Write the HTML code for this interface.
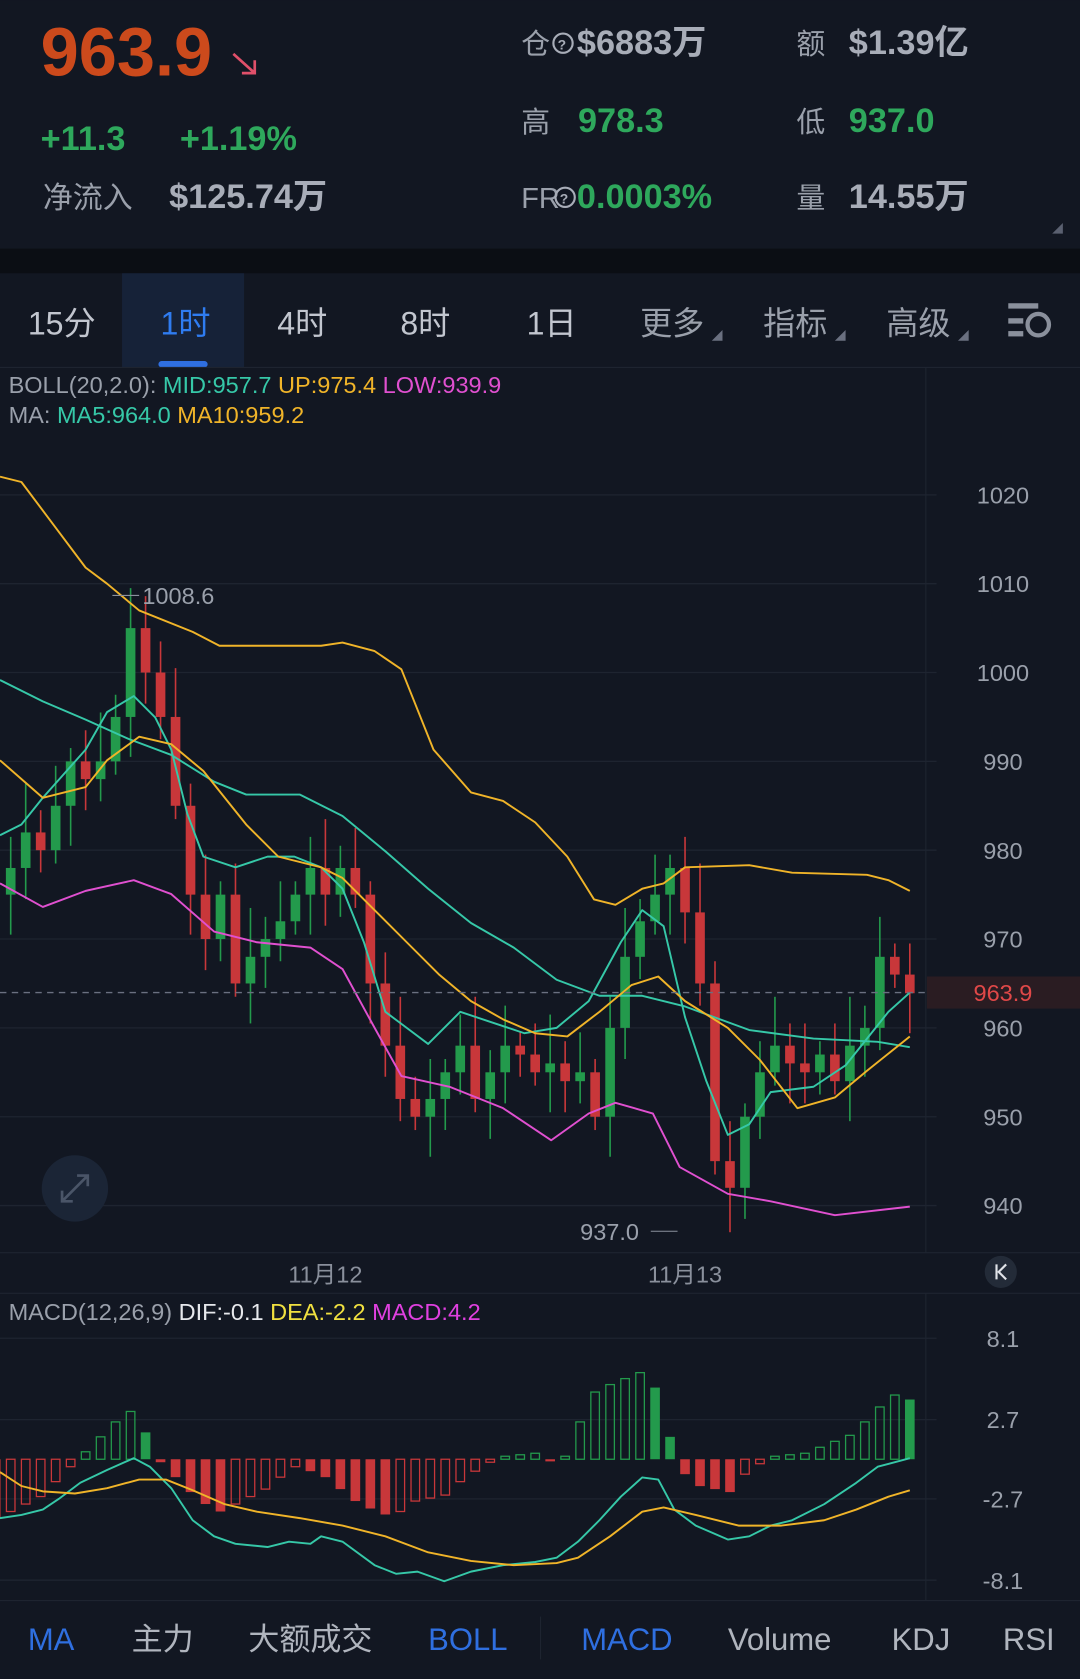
<!DOCTYPE html>
<html><head><meta charset="utf-8">
<style>
html,body{margin:0;padding:0;background:#121722;}
svg{display:block;}
text{font-family:"Liberation Sans Narrow","Liberation Sans","Noto Sans CJK SC",sans-serif;}
.cjk{font-family:"Liberation Sans","Noto Sans CJK SC",sans-serif;}
</style></head>
<body>
<svg id="s" width="1080" height="1679" viewBox="0 0 1009 1568" xmlns="http://www.w3.org/2000/svg">
<rect x="0" y="0" width="1009" height="1568" fill="#121722"/>
<rect x="0" y="232" width="1009" height="23" fill="#0b0e14"/>
<!-- header -->
<text x="38" y="70" font-size="64" font-weight="bold" fill="#cc4a1c">963.9</text>
<path d="M218 50 L238 68 M238 56 L238 68 L226 68" stroke="#e0506a" stroke-width="2.5" fill="none"/>
<text x="38" y="140" font-size="32" font-weight="bold" fill="#2ea85c">+11.3</text>
<text x="168" y="140" font-size="32" font-weight="bold" fill="#2ea85c">+1.19%</text>
<text x="40" y="194" font-size="28" fill="#9aa0ab" class="cjk">净流入</text>
<text x="158" y="194" font-size="32" font-weight="bold" fill="#a8adb8">$125.74万</text>
<text x="487" y="50" font-size="27" fill="#9aa0ab" class="cjk">仓</text>
<circle cx="526" cy="40" r="9" fill="none" stroke="#a8adb8" stroke-width="2"/><text x="521" y="46" font-size="13" font-weight="bold" fill="#a8adb8">?</text>
<text x="539" y="50" font-size="32" font-weight="bold" fill="#a8adb8">$6883万</text>
<text x="744" y="50" font-size="27" fill="#9aa0ab" class="cjk">额</text>
<text x="793" y="50" font-size="32" font-weight="bold" fill="#a8adb8">$1.39亿</text>
<text x="487" y="123" font-size="27" fill="#9aa0ab" class="cjk">高</text>
<text x="540" y="123" font-size="32" font-weight="bold" fill="#2ea85c">978.3</text>
<text x="744" y="123" font-size="27" fill="#9aa0ab" class="cjk">低</text>
<text x="793" y="123" font-size="32" font-weight="bold" fill="#2ea85c">937.0</text>
<text x="487" y="194" font-size="27" fill="#9aa0ab">FR</text>
<circle cx="528" cy="184" r="9" fill="none" stroke="#a8adb8" stroke-width="2"/><text x="523" y="190" font-size="13" font-weight="bold" fill="#a8adb8">?</text>
<text x="539" y="194" font-size="32" font-weight="bold" fill="#2ea85c">0.0003%</text>
<text x="744" y="194" font-size="27" fill="#9aa0ab" class="cjk">量</text>
<text x="793" y="194" font-size="32" font-weight="bold" fill="#a8adb8">14.55万</text>
<path d="M993 208 L993 218 L983 218 Z" fill="#5a6070"/>
<!-- tabs -->
<rect x="114" y="255" width="114" height="88" fill="#162238"/>
<rect x="148" y="337" width="46" height="6" rx="3" fill="#2f6fe0"/>
<g font-size="30" fill="#c2c6cf" class="cjk">
<text x="26" y="312">15分</text>
<text x="150" y="312" fill="#2f7cf0">1时</text>
<text x="259" y="312">4时</text>
<text x="374" y="312">8时</text>
<text x="492" y="312">1日</text>
<text x="598" y="312" fill="#9aa0ab">更多</text>
<text x="713" y="312" fill="#9aa0ab">指标</text>
<text x="828" y="312" fill="#9aa0ab">高级</text>
</g>
<path d="M675 318 L675 308 L665 318Z M790 318 L790 308 L780 318Z M905 318 L905 308 L895 318Z" fill="#6a7080"/>
<g fill="#8a909c"><rect x="942" y="283" width="28" height="5"/><rect x="942" y="297" width="14" height="5"/><rect x="942" y="309" width="14" height="5"/></g>
<circle cx="970" cy="303" r="10" fill="none" stroke="#8a909c" stroke-width="4"/>
<line x1="0" y1="343" x2="1009" y2="343" stroke="#1e2430"/>
<!-- legend -->
<text x="8" y="367" font-size="22"><tspan fill="#9aa0ab">BOLL(20,2.0): </tspan><tspan fill="#36c8a8">MID:957.7 </tspan><tspan fill="#f0b429">UP:975.4 </tspan><tspan fill="#e050d0">LOW:939.9</tspan></text>
<text x="8" y="395" font-size="22"><tspan fill="#9aa0ab">MA: </tspan><tspan fill="#36c8a8">MA5:964.0 </tspan><tspan fill="#f0b429">MA10:959.2</tspan></text>
<line x1="865" y1="343" x2="865" y2="1170" stroke="#1e2430"/>
<g id="grid" stroke="#1e2430" stroke-width="1.2"></g>
<g font-size="22" fill="#9aa0ab" text-anchor="middle">
<text x="937" y="470">1020</text><text x="937" y="553">1010</text><text x="937" y="636">1000</text>
<text x="937" y="719">990</text><text x="937" y="802">980</text><text x="937" y="885">970</text>
<text x="937" y="968">960</text><text x="937" y="1051">950</text><text x="937" y="1134">940</text>
</g>
<g id="candles"></g>
<g fill="none" stroke-width="1.8" stroke-linejoin="round">
<polyline stroke="#f0b429" points="0,445 20,450 50,490 80,530 100,545 130,570 180,590 205,603 300,603 320,600 350,608 375,625 405,700 440,740 470,748 500,768 530,800 555,840 575,845 600,830 620,825 640,810 700,808 740,815 810,817 830,822 850,832"/>
<polyline stroke="#e050d0" points="0,825 40,847 80,832 125,822 160,835 200,870 240,880 290,885 320,905 350,960 375,1005 420,1015 470,1035 515,1065 550,1040 575,1030 610,1040 635,1090 680,1115 720,1122 780,1135 850,1127"/>
<polyline stroke="#36c8a8" points="0,635 40,655 80,672 120,690 160,705 200,730 230,742 280,742 320,762 360,795 400,830 440,862 480,885 520,915 560,930 600,930 640,940 700,962 760,970 820,973 850,978"/>
<polyline stroke="#36c8a8" points="0,780 20,770 40,745 80,700 100,665 125,650 145,670 160,700 175,760 190,800 220,810 250,800 275,800 300,810 320,830 340,880 360,945 380,960 400,975 430,945 460,955 490,965 520,960 550,935 580,880 600,850 620,865 640,950 660,1010 680,1060 700,1050 720,1020 760,1015 790,995 810,970 830,945 850,927"/>
<polyline stroke="#f0b429" points="0,710 40,745 80,735 100,710 130,688 160,695 190,720 230,770 260,800 300,810 320,820 350,850 380,880 410,910 440,935 470,952 500,965 530,968 560,945 590,920 615,912 640,935 680,960 710,990 745,1035 780,1025 810,1000 850,968"/>
</g>
<line x1="0" y1="927" x2="866" y2="927" stroke="#6a7080" stroke-dasharray="6,5" stroke-width="1.2"/>
<rect x="866" y="912" width="143" height="30" fill="#2a1c22"/>
<text x="937" y="935" font-size="22" fill="#e04848" text-anchor="middle">963.9</text>
<line x1="105" y1="556" x2="130" y2="556" stroke="#8a909c"/>
<text x="133" y="564" font-size="22" fill="#9aa0ab">1008.6</text>
<line x1="608" y1="1150" x2="633" y2="1150" stroke="#8a909c"/>
<text x="542" y="1158" font-size="22" fill="#9aa0ab">937.0</text>
<circle cx="70" cy="1110" r="31" fill="#1b2536"/>
<path d="M58 1122 L82 1098 M72 1098 L82 1098 L82 1108 M58 1112 L58 1122 L68 1122" stroke="#4a5568" stroke-width="2.5" fill="none"/>
<!-- date axis -->
<line x1="0" y1="1170" x2="1009" y2="1170" stroke="#1e2430"/>
<line x1="0" y1="1208" x2="1009" y2="1208" stroke="#1e2430"/>
<text x="304" y="1198" font-size="22" fill="#8a909c" text-anchor="middle" class="cjk">11月12</text>
<text x="640" y="1198" font-size="22" fill="#8a909c" text-anchor="middle" class="cjk">11月13</text>
<circle cx="935" cy="1188" r="15" fill="#232b38"/>
<path d="M931 1181 L931 1195 M940 1181 L933 1188 L940 1195" stroke="#e0e3e8" stroke-width="2" fill="none"/>
<!-- macd -->
<text x="8" y="1233" font-size="22"><tspan fill="#9aa0ab">MACD(12,26,9) </tspan><tspan fill="#e6e8ec">DIF:-0.1 </tspan><tspan fill="#f0e040">DEA:-2.2 </tspan><tspan fill="#e040e0">MACD:4.2</tspan></text>
<line x1="865" y1="1208" x2="865" y2="1495" stroke="#1e2430"/>
<g stroke="#1e2430" stroke-width="1.2"><line x1="0" y1="1250" x2="875" y2="1250"/><line x1="0" y1="1326" x2="875" y2="1326"/><line x1="0" y1="1400" x2="875" y2="1400"/><line x1="0" y1="1476" x2="875" y2="1476"/></g>
<g font-size="22" fill="#9aa0ab" text-anchor="middle">
<text x="937" y="1258">8.1</text><text x="937" y="1334">2.7</text><text x="937" y="1408">-2.7</text><text x="937" y="1484">-8.1</text></g>
<g id="hist"></g>
<g fill="none" stroke-width="1.8" stroke-linejoin="round">
<polyline stroke="#36c8a8" points="0,1418 20,1415 40,1410 55,1400 75,1385 100,1373 125,1362 140,1370 160,1390 180,1420 200,1435 220,1442 250,1445 270,1440 290,1442 300,1435 320,1440 350,1462 370,1470 390,1468 415,1477 440,1468 470,1462 500,1459 520,1455 540,1440 560,1420 580,1398 600,1380 615,1382 630,1410 650,1425 680,1438 700,1435 720,1425 740,1420 770,1405 800,1385 820,1370 850,1362"/>
<polyline stroke="#f0b429" points="0,1375 20,1388 40,1393 70,1395 100,1390 130,1382 155,1382 180,1392 210,1405 240,1412 280,1418 320,1425 360,1435 400,1450 440,1458 480,1462 520,1460 540,1455 570,1435 600,1412 620,1408 650,1415 690,1425 730,1425 770,1420 800,1410 830,1398 850,1392"/>
</g>
<!-- bottom tabs -->
<line x1="0" y1="1495" x2="1009" y2="1495" stroke="#1e2430"/>
<line x1="505" y1="1510" x2="505" y2="1550" stroke="#1e2430"/>
<g font-size="29" fill="#b0b5be" class="cjk">
<text x="26" y="1541" fill="#2f6fe0">MA</text>
<text x="123" y="1541">主力</text>
<text x="232" y="1541">大额成交</text>
<text x="400" y="1541" fill="#2f6fe0">BOLL</text>
<text x="543" y="1541" fill="#2f6fe0">MACD</text>
<text x="680" y="1541">Volume</text>
<text x="833" y="1541">KDJ</text>
<text x="937" y="1541">RSI</text>
</g>
</svg>
<script>
var NS="http://www.w3.org/2000/svg";
function el(p,t,a){var e=document.createElementNS(NS,t);for(var k in a)e.setAttribute(k,a[k]);p.appendChild(e);return e;}
var g=document.getElementById('grid');
[462,545,628,711,794,877,960,1043,1126].forEach(function(y){el(g,'line',{x1:0,y1:y,x2:875,y2:y});});
function Y(p){return 462+(1020-p)*8.3;}
var c=[975,978,982,980,985,990,988,990,995,1005,1000,995,985,975,970,975,965,968,970,972,975,978,975,978,975,965,958,952,950,952,955,958,952,955,958,957,955,956,954,955,950,960,968,972,975,978,973,965,945,942,950,955,958,956,955,957,954,958,960,968,966,963.9];
var cg=document.getElementById('candles');
for(var i=1;i<c.length;i++){
 var x=10+14*(i-1),o=c[i-1],cl=c[i],up=cl>=o,col=up?'#239a4c':'#c8373a';
 var hi=Math.max(o,cl)+1.5+(i*7%5),lo=Math.min(o,cl)-1.5-(i*3%4);
 if(i==10)hi=1008.6; if(i==49)lo=937;
 el(cg,'line',{x1:x,y1:Y(hi),x2:x,y2:Y(lo),stroke:col,'stroke-width':1.5});
 var t=Y(Math.max(o,cl)),b=Y(Math.min(o,cl));
 el(cg,'rect',{x:x-4.5,y:t,width:9,height:Math.max(2,b-t),fill:col});
}
var h=[-4,-3.5,-3,-2.5,-1.5,-0.5,0.5,1.5,2.5,3.2,1.8,-0.2,-1.2,-2.2,-3,-3.5,-3,-2.5,-2,-1.2,-0.5,-0.8,-1.2,-2,-2.8,-3.3,-3.7,-3.5,-2.8,-2.6,-2.4,-1.5,-0.8,-0.2,0.2,0.3,0.4,-0.1,0.2,2.5,4.5,5,5.4,5.8,4.8,1.5,-1,-1.8,-2,-2.2,-1,-0.3,0.2,0.3,0.4,0.8,1.2,1.6,2.5,3.5,4.3,4];
var hg=document.getElementById('hist'),Z=1363,S=13.95;
for(var j=0;j<h.length;j++){
 var v=h[j],pv=j?h[j-1]:v+1,x=-4+14*j;if(x<-5)continue;
 var col=v>=0?'#239a4c':'#c8373a',hollow=v>=0?(v>pv):(v>pv);
 var y=v>=0?Z-v*S:Z,hh=Math.max(2,Math.abs(v)*S);
 if(hollow) el(hg,'rect',{x:x-4,y:y,width:8,height:hh,fill:'none',stroke:col,'stroke-width':1.2});
 else el(hg,'rect',{x:x-4.5,y:y,width:9,height:hh,fill:col});
}
</script>
</body></html>
